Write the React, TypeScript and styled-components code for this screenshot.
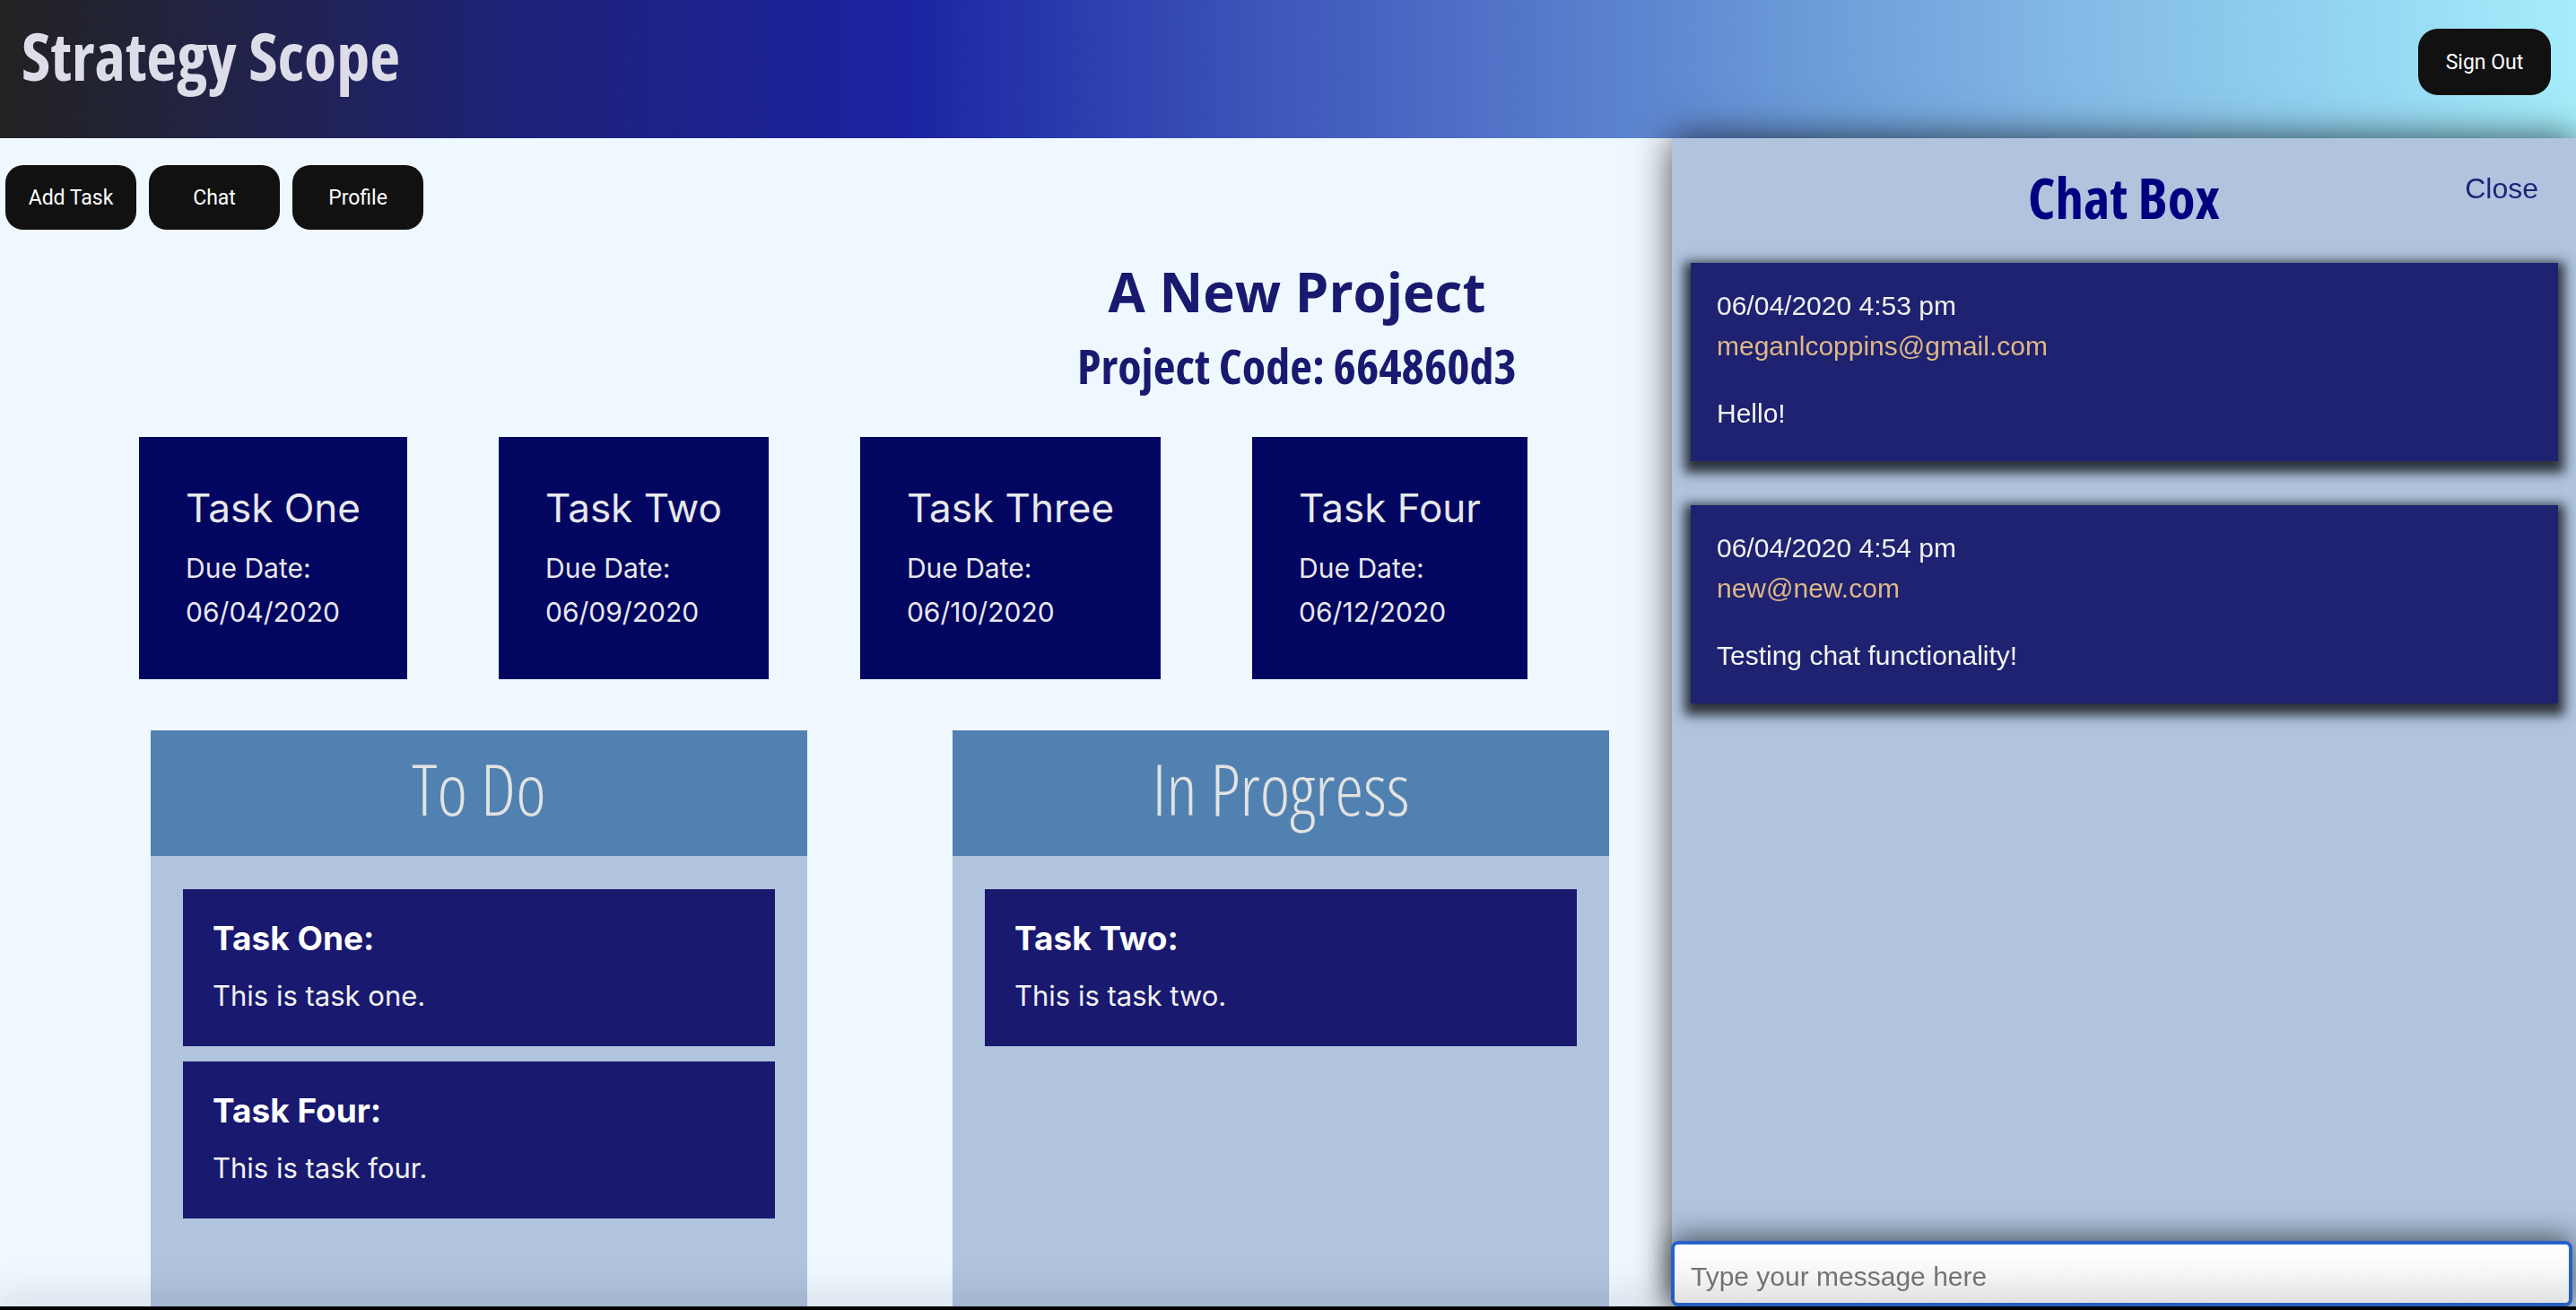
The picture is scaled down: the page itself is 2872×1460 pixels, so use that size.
import React from "react";
import styled, { createGlobalStyle } from "styled-components";

const GlobalStyle = createGlobalStyle`
  html, body {
    margin: 0;
    padding: 0;
  }
  body {
    background: #f0f8ff;
    height: 1460px;
    overflow: hidden;
    font-family: "Liberation Sans", Arial, sans-serif;
  }
  * { box-sizing: border-box; }
`;

const condensed = `
  font-family: "Open Sans", "Liberation Sans Narrow", "DejaVu Sans Condensed", sans-serif;
  font-stretch: 75%;
`;

const Page = styled.div`
  position: relative;
  width: 2872px;
  min-height: 1460px;
`;

const Header = styled.header`
  height: 154px;
  display: flex;
  justify-content: space-between;
  align-items: flex-start;
  padding: 0 28px 0 24px;
  background: linear-gradient(
    to right,
    #222222 0%,
    #22233a 6%,
    #1e2278 20%,
    #1b23a1 35%,
    #3a52b8 48%,
    #5679cb 60%,
    #6b9bd8 70%,
    #82b8e5 80%,
    #92d2f0 90%,
    #a5edfb 100%
  );
`;

const Brand = styled.h1`
  ${condensed}
  margin: 0;
  padding-top: 23px;
  font-size: 74px;
  line-height: 78px;
  font-weight: 700;
  color: #dcdde8;
`;

const DarkButton = styled.button<{ $w?: number }>`
  height: 72px;
  width: ${(p) => p.$w ?? 146}px;
  border: none;
  border-radius: 20px;
  background: #111111;
  color: #ffffff;
  font-family: Roboto, "Liberation Sans", sans-serif;
  font-size: 23px;
  cursor: pointer;
`;

const SignOut = styled(DarkButton)`
  margin-top: 32px;
  height: 74px;
  border-radius: 22px;
`;

const Main = styled.main`
  display: flex;
  flex-direction: column;
`;

const Toolbar = styled.nav`
  display: flex;
  gap: 14px;
  padding: 30px 0 0 6px;
`;

const ProjectHeading = styled.section`
  margin-top: 33px;
  padding-left: 20px;
  text-align: center;
  color: #191970;
`;

const ProjectName = styled.h2`
  margin: 0;
  font-family: "Open Sans", sans-serif;
  font-size: 60px;
  line-height: 72px;
  font-weight: 700;
`;

const ProjectCode = styled.h3`
  ${condensed}
  margin: 13px 0 0;
  font-size: 54px;
  line-height: 66px;
  font-weight: 700;
`;

const TaskStrip = styled.section`
  width: 1858px;
  margin-top: 47px;
  display: flex;
  justify-content: center;
  gap: 102px;
`;

const TaskCard = styled.article`
  background: #020660;
  padding: 51px 52px 50px;
  color: #e8e8ec;
  font-family: Inter, "Liberation Sans", sans-serif;
`;

const TaskCardTitle = styled.h4`
  margin: 0 0 15px;
  font-size: 44px;
  line-height: 56px;
  font-weight: 400;
  white-space: nowrap;
`;

const TaskCardLine = styled.div`
  font-size: 30px;
  line-height: 49px;
  white-space: nowrap;
`;

const Board = styled.section`
  margin-top: 57px;
  display: flex;
  gap: 162px;
  padding-left: 168px;
`;

const Column = styled.div`
  width: 732px;
  display: flex;
  flex-direction: column;
`;

const ColumnHeader = styled.h2`
  ${condensed}
  margin: 0;
  height: 140px;
  padding-top: 16px;
  background: #5181b1;
  color: #e2e2e2;
  text-align: center;
  font-size: 80px;
  line-height: 96px;
  font-weight: 300;
`;

const ColumnBody = styled.div`
  min-height: 620px;
  background: #b0c4de;
  padding: 37px 36px;
  display: flex;
  flex-direction: column;
  gap: 17px;
`;

const BoardItem = styled.div`
  background: #191970;
  padding: 32px 33px 37px;
  color: #ffffff;
  font-family: Inter, "Liberation Sans", sans-serif;
`;

const BoardItemTitle = styled.h5`
  margin: 0 0 22px;
  font-size: 37px;
  line-height: 45px;
  font-weight: 700;
`;

const BoardItemText = styled.p`
  margin: 0;
  font-size: 31px;
  line-height: 39px;
  color: #f2f2f2;
`;

const ChatPanel = styled.aside`
  position: fixed;
  top: 154px;
  right: 0;
  bottom: 0;
  width: 1008px;
  background: #b0c4de;
  box-shadow: 0 0 40px rgba(0, 0, 0, 0.7);
  display: flex;
  flex-direction: column;
  z-index: 2;
`;

const ChatTitle = styled.h2`
  ${condensed}
  margin: 0;
  padding-top: 26px;
  text-align: center;
  font-size: 63px;
  line-height: 80px;
  font-weight: 700;
  color: #000080;
`;

const CloseLink = styled.button`
  position: absolute;
  top: 38px;
  right: 42px;
  border: none;
  background: none;
  padding: 0;
  font-family: "Liberation Sans", Arial, sans-serif;
  font-size: 32px;
  line-height: 37px;
  color: #1d2479;
  cursor: pointer;
`;

const MessageList = styled.div`
  flex: 1;
  display: flex;
  flex-direction: column;
  gap: 49px;
  padding: 33px 20px 0 21px;
`;

const MessageCard = styled.div`
  background: #1e2270;
  padding: 25px 29px 31px;
  box-shadow: 0 6px 12px 7px rgba(20, 25, 30, 0.85);
  font-family: "Liberation Sans", Arial, sans-serif;
  font-size: 30px;
  line-height: 45px;
`;

const MessageMeta = styled.div<{ $tone: "date" | "email" }>`
  color: ${(p) => (p.$tone === "email" ? "#deb887" : "#f0f0f0")};
`;

const MessageText = styled.div`
  margin-top: 30px;
  color: #f4f4f4;
`;

const ChatInput = styled.input`
  height: 73px;
  margin: 0 4px 4px -1px;
  border: 4px solid #2563c8;
  border-radius: 8px;
  padding: 6px 18px 0;
  background: linear-gradient(#ffffff, #f2f2f2);
  box-shadow: 0 -6px 30px rgba(0, 0, 0, 0.55);
  font-family: "Liberation Sans", Arial, sans-serif;
  font-size: 30px;
  color: #222;
  outline: none;
  &::placeholder {
    color: #767676;
  }
`;

const BottomEdge = styled.div`
  position: fixed;
  left: 0;
  right: 0;
  bottom: 0;
  height: 4px;
  background: #000;
  box-shadow: 0 0 40px 8px rgba(40, 50, 70, 0.22);
  z-index: 3;
`;

const cards = [
  { title: "Task One", date: "06/04/2020" },
  { title: "Task Two", date: "06/09/2020" },
  { title: "Task Three", date: "06/10/2020" },
  { title: "Task Four", date: "06/12/2020" },
];

const columns = [
  {
    name: "To Do",
    items: [
      { title: "Task One:", text: "This is task one." },
      { title: "Task Four:", text: "This is task four." },
    ],
  },
  {
    name: "In Progress",
    items: [{ title: "Task Two:", text: "This is task two." }],
  },
];

const messages = [
  { date: "06/04/2020 4:53 pm", email: "meganlcoppins@gmail.com", text: "Hello!" },
  { date: "06/04/2020 4:54 pm", email: "new@new.com", text: "Testing chat functionality!" },
];

export default function App() {
  return (
    <Page>
      <GlobalStyle />
      <Header>
        <Brand>Strategy Scope</Brand>
        <SignOut $w={148}>Sign Out</SignOut>
      </Header>
      <Main>
        <Toolbar>
          <DarkButton>Add Task</DarkButton>
          <DarkButton>Chat</DarkButton>
          <DarkButton>Profile</DarkButton>
        </Toolbar>
        <ProjectHeading>
          <ProjectName>A New Project</ProjectName>
          <ProjectCode>Project Code: 664860d3</ProjectCode>
        </ProjectHeading>
        <TaskStrip>
          {cards.map((c) => (
            <TaskCard key={c.title}>
              <TaskCardTitle>{c.title}</TaskCardTitle>
              <TaskCardLine>Due Date:</TaskCardLine>
              <TaskCardLine>{c.date}</TaskCardLine>
            </TaskCard>
          ))}
        </TaskStrip>
        <Board>
          {columns.map((col) => (
            <Column key={col.name}>
              <ColumnHeader>{col.name}</ColumnHeader>
              <ColumnBody>
                {col.items.map((it) => (
                  <BoardItem key={it.title}>
                    <BoardItemTitle>{it.title}</BoardItemTitle>
                    <BoardItemText>{it.text}</BoardItemText>
                  </BoardItem>
                ))}
              </ColumnBody>
            </Column>
          ))}
        </Board>
      </Main>
      <ChatPanel>
        <ChatTitle>Chat Box</ChatTitle>
        <CloseLink>Close</CloseLink>
        <MessageList>
          {messages.map((m) => (
            <MessageCard key={m.date}>
              <MessageMeta $tone="date">{m.date}</MessageMeta>
              <MessageMeta $tone="email">{m.email}</MessageMeta>
              <MessageText>{m.text}</MessageText>
            </MessageCard>
          ))}
        </MessageList>
        <ChatInput placeholder="Type your message here" />
      </ChatPanel>
      <BottomEdge />
    </Page>
  );
}
